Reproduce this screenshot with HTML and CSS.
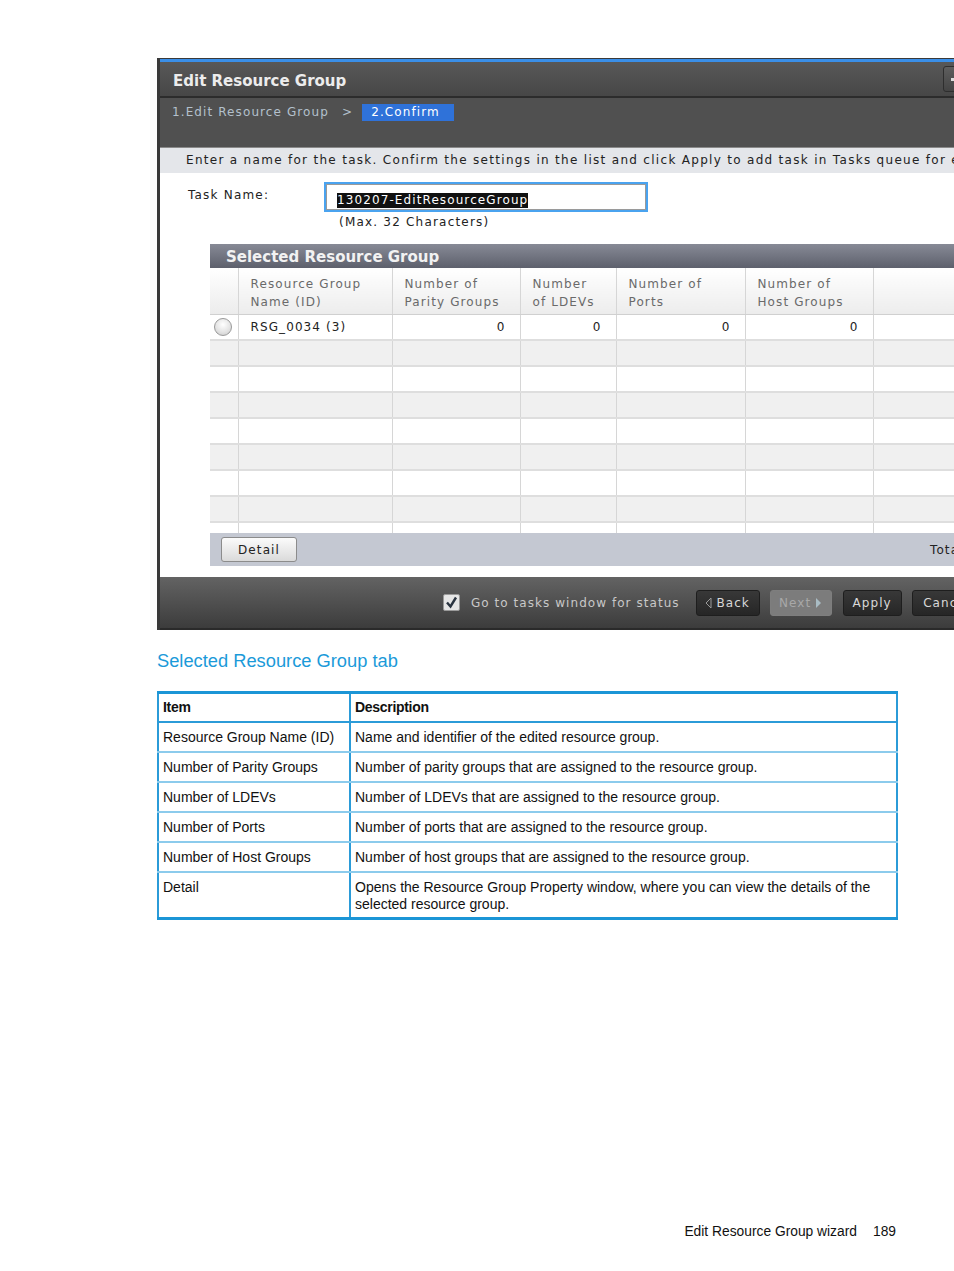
FILE: index.html
```html
<!DOCTYPE html>
<html>
<head>
<meta charset="utf-8">
<link rel="stylesheet" href="styles.css">
</head>
<body>
<div class="page">
  <div class="dialog">
    <div class="dlg-top"></div>
    <div class="dlg-head">
      <span class="dlg-title">Edit Resource Group</span>
      <span class="dlg-tool"><span class="tool-bar"></span></span>
    </div>
    <div class="crumbs">
      <span class="crumb">1.Edit Resource Group</span>
      <span class="crumb-sep">&gt;</span>
      <span class="crumb active">2.Confirm</span>
    </div>
    <div class="intro">Enter a name for the task. Confirm the settings in the list and click Apply to add task in Tasks queue for execution.</div>
    <div class="content">
      <div class="task-row">
        <span class="task-label">Task Name:</span>
        <div class="task-field">
          <div class="task-input"><span class="sel">130207-EditResourceGroup</span></div>
          <div class="task-hint">(Max. 32 Characters)</div>
        </div>
      </div>
      <div class="panel">
        <div class="panel-head">Selected Resource Group</div>
        <table class="grid">
          <colgroup>
            <col class="c0"><col class="c1"><col class="c2"><col class="c3"><col class="c4"><col class="c5"><col class="c6">
          </colgroup>
          <thead>
            <tr>
              <th></th>
              <th>Resource Group<br>Name (ID)</th>
              <th>Number of<br>Parity Groups</th>
              <th>Number<br>of LDEVs</th>
              <th>Number of<br>Ports</th>
              <th>Number of<br>Host Groups</th>
              <th></th>
            </tr>
          </thead>
          <tbody>
            <tr class="data">
              <td class="rad"><span class="radio"></span></td>
              <td>RSG_0034 (3)</td>
              <td class="num">0</td>
              <td class="num">0</td>
              <td class="num">0</td>
              <td class="num">0</td>
              <td></td>
            </tr>
            <tr class="alt"><td></td><td></td><td></td><td></td><td></td><td></td><td></td></tr>
            <tr><td></td><td></td><td></td><td></td><td></td><td></td><td></td></tr>
            <tr class="alt"><td></td><td></td><td></td><td></td><td></td><td></td><td></td></tr>
            <tr><td></td><td></td><td></td><td></td><td></td><td></td><td></td></tr>
            <tr class="alt"><td></td><td></td><td></td><td></td><td></td><td></td><td></td></tr>
            <tr><td></td><td></td><td></td><td></td><td></td><td></td><td></td></tr>
            <tr class="alt"><td></td><td></td><td></td><td></td><td></td><td></td><td></td></tr>
            <tr class="short"><td></td><td></td><td></td><td></td><td></td><td></td><td></td></tr>
          </tbody>
        </table>
        <div class="panel-foot">
          <span class="btn-light">Detail</span>
          <span class="total">Total: 1</span>
        </div>
      </div>
    </div>
    <div class="dlg-foot">
      <span class="check">
        <svg width="17" height="17" viewBox="0 0 17 17"><rect x="0.5" y="0.5" width="16" height="16" rx="1.5" fill="#e6e6e6" stroke="#9a9a9a"/><path d="M4 8.5 L7.5 12.5 L13 3.5" fill="none" stroke="#2a3440" stroke-width="2.4"/></svg>
      </span>
      <span class="check-label">Go to tasks window for status</span>
      <span class="btn-dark b-back">
        <svg width="7" height="12" viewBox="0 0 7 12"><path d="M6 1 L1 6 L6 11 Z" fill="none" stroke="#9a9a9a" stroke-width="1"/></svg>
        Back
      </span>
      <span class="btn-dark b-next disabled">Next
        <svg width="7" height="12" viewBox="0 0 7 12"><path d="M1 1 L6 6 L1 11 Z" fill="#a9bcc4"/></svg>
      </span>
      <span class="btn-dark b-apply">Apply</span>
      <span class="btn-dark b-cancel">Cancel</span>
    </div>
  </div>

  <h2 class="sec-title">Selected Resource Group tab</h2>

  <table class="doc">
    <colgroup><col class="d1"><col class="d2"></colgroup>
    <thead>
      <tr><th>Item</th><th>Description</th></tr>
    </thead>
    <tbody>
      <tr><td>Resource Group Name (ID)</td><td>Name and identifier of the edited resource group.</td></tr>
      <tr><td>Number of Parity Groups</td><td>Number of parity groups that are assigned to the resource group.</td></tr>
      <tr><td>Number of LDEVs</td><td>Number of LDEVs that are assigned to the resource group.</td></tr>
      <tr><td>Number of Ports</td><td>Number of ports that are assigned to the resource group.</td></tr>
      <tr><td>Number of Host Groups</td><td>Number of host groups that are assigned to the resource group.</td></tr>
      <tr><td>Detail</td><td>Opens the Resource Group Property window, where you can view the details of the selected resource group.</td></tr>
    </tbody>
  </table>

  <div class="footer">
    <span>Edit Resource Group wizard</span>
    <span class="pg">189</span>
  </div>
</div>
</body>
</html>
```

FILE: styles.css
```css
html, body {
  margin: 0;
  padding: 0;
  background: #ffffff;
}

.page {
  width: 954px;
  height: 1271px;
  overflow: hidden;
  position: relative;
  font-family: "Liberation Sans", Arial, sans-serif;
}

/* ---------- dialog screenshot ---------- */
.dialog {
  margin-left: 157px;
  margin-top: 58px;
  width: 840px;
  border-left: 3px solid #3a3a3a;
  font-family: "DejaVu Sans", Verdana, sans-serif;
  box-sizing: border-box;
}

.dlg-top {
  height: 1px;
  background: #3a3a3a;
  border-bottom: 3px solid #3a8fe8;
}

.dlg-head {
  height: 34px;
  background: linear-gradient(#585858, #474747);
  border-bottom: 2px solid #2c2c2c;
  display: flex;
  align-items: center;
  padding-left: 13px;
}

.dlg-title {
  color: #ececec;
  font-weight: bold;
  font-size: 15px;
  letter-spacing: 0;
  margin-top: 3px;
}

.dlg-tool {
  margin-left: auto;
  margin-right: 22px;
  width: 32px;
  height: 26px;
  border: 1px solid #2e2e2e;
  border-radius: 3px;
  background: linear-gradient(#5e5e5e, #444);
  box-sizing: border-box;
  display: flex;
  align-items: center;
  padding-left: 7px;
}

.tool-bar {
  width: 10px;
  height: 3px;
  background: #dcdcdc;
}

.crumbs {
  height: 50px;
  background: #505050;
  border-bottom: 1px solid #8a8a8a;
  display: flex;
  align-items: flex-start;
  padding-left: 12px;
  padding-top: 6px;
  box-sizing: border-box;
  font-size: 12px;
  letter-spacing: 1.1px;
}

.crumb {
  color: #b3c0cc;
  line-height: 17px;
}

.crumb-sep {
  color: #b3c0cc;
  line-height: 17px;
  margin-left: 13px;
  margin-right: 9px;
}

.crumb.active {
  background: #2f72d9;
  color: #ffffff;
  padding: 0 14px 0 9px;
}

.intro {
  height: 25px;
  background: #e4e6ea;
  color: #222;
  font-size: 12px;
  letter-spacing: 1.3px;
  line-height: 25px;
  padding-left: 26px;
  white-space: nowrap;
  overflow: hidden;
}

.content {
  background: #ffffff;
  padding-top: 9px;
  padding-bottom: 11px;
}

.task-row {
  display: flex;
  padding-left: 28px;
}

.task-label {
  width: 136px;
  font-size: 12px;
  letter-spacing: 1.2px;
  color: #222;
  padding-top: 6px;
}

.task-field {
  display: flex;
  flex-direction: column;
}

.task-input {
  width: 324px;
  height: 30px;
  border: 2px solid #4aa3ef;
  box-shadow: inset 0 0 0 1px #9a9a9a;
  box-sizing: border-box;
  padding-left: 11px;
  padding-top: 5px;
}

.sel {
  background: #111;
  color: #fff;
  font-size: 12px;
  letter-spacing: 1.1px;
  line-height: 15px;
  display: inline-block;
}

.task-hint {
  font-size: 12px;
  letter-spacing: 1.2px;
  color: #222;
  margin-top: 3px;
  padding-left: 15px;
}

.panel {
  margin-left: 50px;
  margin-top: 15px;
  width: 783px;
}

.panel-head {
  height: 24px;
  background: linear-gradient(#878a96, #5d606c);
  color: #f2f2f2;
  font-weight: bold;
  font-size: 15px;
  line-height: 26px;
  padding-left: 16px;
}

.grid {
  width: 783px;
  table-layout: fixed;
  border-collapse: collapse;
  font-size: 12px;
  letter-spacing: 1.1px;
}

.c0 { width: 28px; }
.c1 { width: 154px; }
.c2 { width: 128px; }
.c3 { width: 96px; }
.c4 { width: 129px; }
.c5 { width: 128px; }
.c6 { width: 120px; }

.grid th {
  height: 46px;
  background: linear-gradient(#ffffff, #ececec);
  border-right: 1px solid #d6d6d6;
  border-bottom: 1px solid #d0d0d0;
  color: #6a6a6a;
  font-weight: normal;
  text-align: left;
  vertical-align: top;
  padding: 7px 0 0 12px;
  line-height: 18px;
  box-sizing: border-box;
  white-space: nowrap;
}

.grid td {
  height: 26px;
  border-right: 1px solid #d6d6d6;
  border-bottom: 2px solid #dedede;
  padding: 0 12px;
  color: #222;
  box-sizing: border-box;
}

.grid tr.alt td {
  background: #f0f0f0;
}

.grid tr.short td {
  height: 11px;
  border-bottom: none;
}

.grid td.num {
  text-align: right;
  padding-right: 14px;
}

.grid td.rad {
  padding: 0 0 0 4px;
}

.radio {
  display: block;
  width: 18px;
  height: 18px;
  border-radius: 50%;
  border: 1px solid #9a9a9a;
  box-sizing: border-box;
  background: radial-gradient(circle at 50% 35%, #ffffff 0%, #e4e4e4 55%, #c8c8c8 100%);
}

.panel-foot {
  height: 33px;
  background: #c4c8d2;
  display: flex;
  align-items: center;
  padding-left: 11px;
  padding-right: 0;
  font-size: 12px;
  letter-spacing: 1.1px;
}

.btn-light {
  width: 76px;
  height: 25px;
  box-sizing: border-box;
  border: 1px solid #8c8c8c;
  border-radius: 3px;
  background: linear-gradient(#fbfbfb, #dadada);
  color: #222;
  display: flex;
  align-items: center;
  justify-content: center;
}

.total {
  margin-left: auto;
  width: 63px;
  color: #222;
  white-space: nowrap;
}

.dlg-foot {
  height: 53px;
  background: linear-gradient(#636363, #3c3c3c);
  border-bottom: 2px solid #2a2a2a;
  display: flex;
  align-items: center;
  padding-left: 283px;
  box-sizing: border-box;
  font-size: 12px;
  letter-spacing: 1.05px;
}

.check {
  display: flex;
  width: 17px;
  height: 17px;
}

.check-label {
  color: #c8c8c8;
  margin-left: 11px;
  margin-right: 16px;
  white-space: nowrap;
}

.btn-dark {
  height: 26px;
  box-sizing: border-box;
  border: 1px solid #1e1e1e;
  border-radius: 3px;
  background: linear-gradient(#383838, #262626);
  color: #d8d8d8;
  display: flex;
  align-items: center;
  justify-content: center;
  gap: 4px;
  padding: 0 5px;
  white-space: nowrap;
  flex-shrink: 0;
}

.b-back { width: 64px; margin-right: 10px; }
.b-next { width: 62px; margin-right: 11px; }
.b-apply { width: 59px; margin-right: 10px; }
.b-cancel { width: 70px; }

.btn-dark.disabled {
  background: #7c7c7c;
  border-color: #7e7e7e;
  color: #a8a8a8;
}

/* ---------- document part ---------- */
.sec-title {
  margin: 19px 0 0 157px;
  font-weight: normal;
  font-size: 18.3px;
  color: #1b9ad9;
  line-height: 24px;
}

.doc {
  margin-left: 157px;
  margin-top: 18px;
  width: 739px;
  border-collapse: collapse;
  table-layout: fixed;
  font-size: 14px;
  color: #111;
  border-top: 3px solid #1b95d6;
  border-bottom: 3px solid #1b95d6;
}

.d1 { width: 192px; }
.d2 { width: 547px; }

.doc th {
  text-align: left;
  font-weight: bold;
  height: 29px;
  padding: 0 4px;
  border-left: 2px solid #2b9bd8;
  border-right: 2px solid #2b9bd8;
  border-bottom: 2px solid #2b9bd8;
  letter-spacing: -0.3px;
  box-sizing: border-box;
}

.doc td {
  height: 30px;
  padding: 0 4px;
  border-left: 2px solid #2b9bd8;
  border-right: 2px solid #2b9bd8;
  border-bottom: 2px solid #8ccbec;
  vertical-align: top;
  line-height: 17px;
  padding-top: 6px;
  box-sizing: border-box;
}

.doc tr:last-child td {
  border-bottom: none;
  height: 47px;
}

.footer {
  position: absolute;
  right: 58px;
  top: 1224px;
  font-size: 13.8px;
  color: #111;
  display: flex;
  gap: 16px;
}
```
